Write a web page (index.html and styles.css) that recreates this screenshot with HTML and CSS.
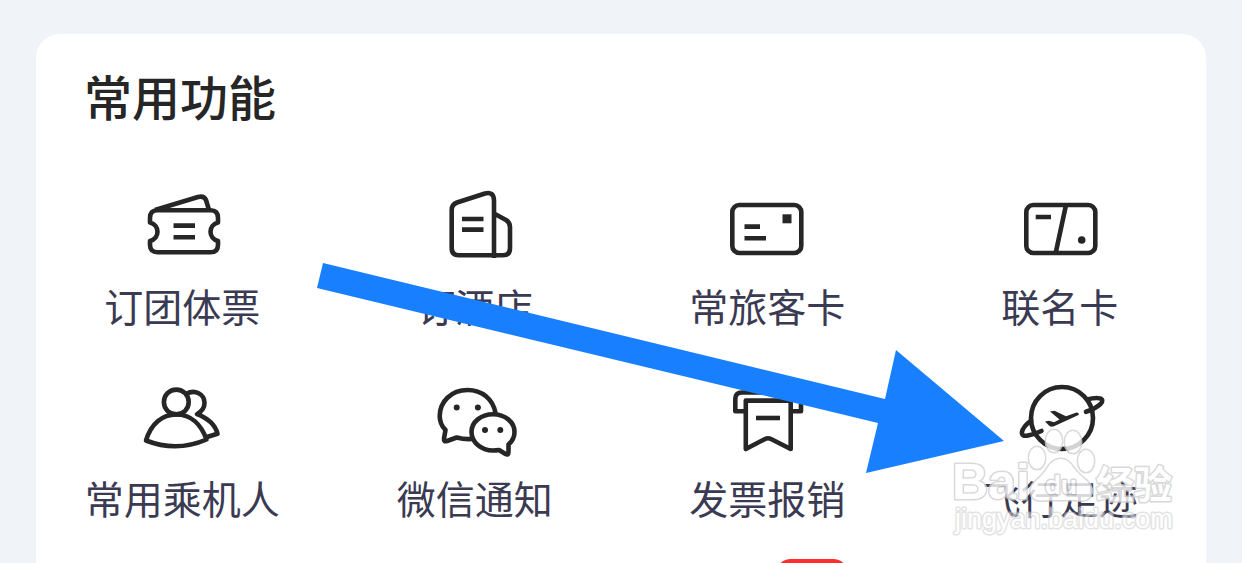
FILE: index.html
```
<!DOCTYPE html>
<html lang="zh-CN">
<head>
	<meta charset="utf-8">
	<meta name="viewport" content="width=device-width">
	<title>常用功能</title>
	<link rel="stylesheet" href="styles.css">
</head>
<body>
	<main class="card">
		<h1 class="title">常用功能</h1>
		<ul class="grid">
			<li class="tile">
				<svg class="icon" viewBox="0 0 88 80">
					<path d="M17 25 L60 12 Q66 10.5 68 15 L71 25" />
					<path d="M12 37.5 V33 Q12 25.3 19.5 25.3 H72.5 Q80 25.3 80 33 V37.5 C70 40 70 53.5 80 56 V60 Q80 67.3 72.5 67.3 H19.5 Q12 67.3 12 60 V56 C22 53.5 22 40 12 37.5 Z" />
					<path d="M35.5 40.6 H57 M35.5 52.3 H57" />
				</svg>
				<span class="label">订团体票</span>
			</li>
			<li class="tile">
				<svg class="icon" viewBox="0 0 88 80">
					<path d="M63 73 V16 Q63 6 54 8.5 L26 17.5 Q20.7 19.5 20.7 25 V63 Q20.7 70.3 28 70.3 H72 Q79 70.3 79 63 V42 Q79 37.5 75 35 L63 28.5" />
					<path d="M31 34 H52.5 M31 44.6 H52.5" />
				</svg>
				<span class="label">订酒店</span>
			</li>
			<li class="tile">
				<svg class="icon" viewBox="0 0 88 80">
					<rect x="9.3" y="20" width="69" height="48" rx="7" />
					<path d="M21.5 41.6 H37 M21.5 53.3 H43" />
					<rect class="solid" x="59.5" y="29.3" width="9" height="9" />
				</svg>
				<span class="label">常旅客卡</span>
			</li>
			<li class="tile">
				<svg class="icon" viewBox="0 0 88 80">
					<rect x="10.3" y="20" width="69" height="48" rx="7" />
					<path d="M19.7 32 H35 M50 20 L39.7 68" />
					<circle class="solid" cx="65.7" cy="55" r="3.8" />
				</svg>
				<span class="label">联名卡</span>
			</li>
			<li class="tile">
				<svg class="icon" viewBox="0 0 88 80">
					<circle cx="38.3" cy="25" r="12.4" />
					<path d="M8 63.5 C13 47 24 37.5 38.3 37.5 S63 47 68.5 62.5 Q38.5 75.5 8 63.5 Z" />
					<path d="M48 17 C57 12 66.5 17 66.5 26 Q66.5 33 59 37.2 C69 41 77 47 79.5 56.7 L69 60" />
				</svg>
				<span class="label">常用乘机人</span>
			</li>
			<li class="tile">
				<svg class="icon" viewBox="0 0 88 80">
					<path d="M64.5 36 C62 22 51 13 36.5 13 C20 13 8.7 25 8.7 39 C8.7 44 10.5 49 14.5 53 L13 61.5 Q12.5 65 16 64 L25.7 60.5 Q33 62.5 41 62" />
					<path d="M68 73 L74.5 77 Q77.5 78.5 77.5 75 L77.5 67.5 C81.5 64 83.5 60 83.5 55 C83.5 45 74 37.3 62 37.3 S40.5 45 40.5 55 S50 73.5 62 73.5 Q65 73.5 68 73 Z" />
					<circle class="solid" cx="25.7" cy="30.4" r="3" />
					<circle class="solid" cx="46.9" cy="30.6" r="3" />
					<circle class="solid" cx="54" cy="53" r="3" />
					<circle class="solid" cx="69.3" cy="53" r="3" />
				</svg>
				<span class="label">微信通知</span>
			</li>
			<li class="tile">
				<svg class="icon" viewBox="0 0 88 80">
					<path d="M23 34.3 H12.3 V22 Q12.3 15.5 19 15.5 H71 Q78 15.5 78 22 V34.3 H68" />
					<path d="M22.8 23.6 H67.7 V72 L48 62 Q45 60.5 42 62 L22.8 72 Z" />
					<path d="M33 41 H57" />
				</svg>
				<span class="label">发票报销</span>
			</li>
			<li class="tile">
				<svg class="icon" viewBox="0 0 88 80">
					<circle cx="46" cy="41" r="31" />
					<path class="round" d="M71 22.5 C82 19.5 90 21 84.5 27 Q79 32 70 34.8 M15 43.5 C4 52 3 60.5 12 58.5 Q19 57 25.5 54" />
					<path class="solid" d="M34 34.5 L38.5 33.7 L50 39.3 L60.5 35.4 Q63.5 35.5 62.5 38 L38 49.3 Q35 50.5 33 48.5 L29 44.5 L33 43.7 L38 45.3 L43.5 42.5 Z" />
				</svg>
				<span class="label">飞行足迹</span>
			</li>
			<li class="tile next"><span class="badge"></span></li>
		</ul>

		<svg class="arrow" viewBox="0 0 688 211">
			<path d="M6 0 L568 136 L579 87 L687 178 L549 210 L561 160 L0 25 Z" />
		</svg>

		<svg class="watermark" viewBox="0 0 240 120">
			<!-- paw -->
			<ellipse cx="92" cy="33" rx="8" ry="11" />
			<ellipse cx="109" cy="16" rx="8" ry="11" />
			<ellipse cx="128" cy="17" rx="8" ry="11" />
			<ellipse cx="141" cy="36" rx="8" ry="11" />
			<path d="M116 34 Q123 34 128 42 Q133 49 142 56 Q150 64 145 72 Q141 77 130 75 H102 Q90 77 87 71 Q83 63 91 56 Q99 49 103 42 Q108 34 116 34 Z" />
			<text class="brand" x="7" y="74">Bai</text>
			<text class="du" x="100" y="69">du</text>
			<text class="cn" x="151" y="73">经验</text>
			<text class="site" x="10" y="103">jingyan.baidu.com</text>
		</svg>
	</main>
</body>
</html>
```
FILE: styles.css
```
* {
	box-sizing: border-box;
}

body {
	background: #f0f3f8;
	font-family: "Noto Sans CJK SC", sans-serif;
	margin: 0;
	padding: 34px 36px 0;
}

.card {
	background: #fff;
	border-radius: 24px 24px 0 0;
	min-height: calc(100vh - 34px);
	overflow: hidden;
	position: relative;
}

.title {
	color: #262626;
	font-size: 48px;
	font-weight: 500;
	line-height: 64px;
	margin: 0;
	padding: 29px 48px 40px;
}

.grid {
	display: grid;
	grid-template-columns: repeat(4, 1fr);
	list-style: none;
	margin: 0;
	padding: 0;
}
.tile {
	align-items: center;
	display: flex;
	flex-direction: column;
	padding: 18px 0 30px;
	position: relative;
}
.next {
	grid-column: 3;
	height: 12px;
	padding: 0;
}

.icon {
	fill: none;
	height: 80px;
	overflow: visible;
	stroke: #262626;
	stroke-linejoin: round;
	stroke-width: 4.6px;
	width: 88px;
}
.icon .solid {
	fill: #262626;
	stroke: none;
}
.icon .round {
	stroke-linecap: round;
}
.label {
	color: #3a3a52;
	font-size: 39px;
	line-height: 48px;
	margin-top: 16px;
	white-space: nowrap;
}

.badge {
	background: #ff2d2d;
	border-radius: 16px;
	height: 40px;
	left: calc(50% + 8px);
	position: absolute;
	top: 8px;
	width: 74px;
}

.arrow {
	fill: #187fff;
	height: 211px;
	left: 281px;
	position: absolute;
	top: 229px;
	width: 688px;
}

.watermark {
	fill: #fff;
	height: 120px;
	opacity: 0.8;
	paint-order: stroke;
	position: absolute;
	right: 21px;
	stroke: #d0d0d0;
	stroke-linejoin: round;
	stroke-width: 3px;
	top: 391px;
	width: 240px;
}
.watermark text {
	font-family: "Liberation Sans", "Noto Sans CJK SC", sans-serif;
}
.watermark .brand {
	font-size: 50px;
	font-weight: bold;
}
.watermark .du {
	font-size: 26px;
	font-weight: bold;
}
.watermark .cn {
	font-size: 38px;
	font-weight: bold;
}
.watermark .site {
	font-size: 27px;
	opacity: 0.7;
}
```
